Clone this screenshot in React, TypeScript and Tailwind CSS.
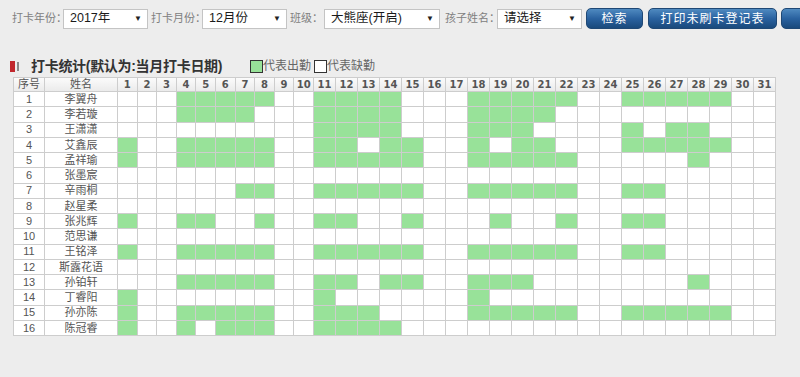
import React from 'react';

const font = { fontFamily: '"Liberation Sans", "Noto Sans CJK SC", sans-serif' };

const students: [string, number[]][] = [
  ['李翼舟', [4, 5, 6, 7, 8, 11, 12, 13, 14, 18, 19, 20, 21, 22, 25, 26, 27, 28, 29]],
  ['李若璇', [4, 5, 6, 7, 11, 12, 13, 14, 18, 19, 20, 21]],
  ['王潇潇', [11, 12, 13, 14, 18, 19, 20, 25, 27, 28]],
  ['艾鑫辰', [1, 4, 5, 6, 7, 8, 11, 12, 14, 15, 18, 20, 21, 25, 26, 27, 28, 29]],
  ['孟祥瑜', [1, 4, 5, 6, 7, 8, 11, 12, 13, 14, 15, 18, 19, 20, 21, 22, 28]],
  ['张墨宸', []],
  ['辛雨桐', [7, 8, 11, 12, 13, 14, 15, 18, 19, 20, 21, 22, 25, 26]],
  ['赵星柔', []],
  ['张兆辉', [1, 4, 5, 8, 11, 12, 15, 19, 22, 25, 26]],
  ['范思谦', []],
  ['王铭泽', [1, 4, 5, 6, 7, 8, 11, 12, 13, 14, 15, 18, 19, 20, 21, 22, 25, 26]],
  ['斯露花语', []],
  ['孙铂轩', [4, 5, 6, 7, 8, 11, 12, 14, 15, 18, 19, 20, 28]],
  ['丁睿阳', [1, 11, 18]],
  ['孙亦陈', [1, 4, 5, 6, 7, 8, 11, 12, 13, 18, 19, 20, 21, 22, 25, 26, 27, 28, 29]],
  ['陈冠睿', [1, 4, 6, 7, 8, 11, 12, 13, 14]],
];

const days = Array.from({ length: 31 }, (_, i) => i + 1);

const Select = ({ value, width }: { value: string; width: string }) => (
  <div className={`${width} h-[20px] shrink-0 bg-white border border-[#c4c4c4] flex items-center justify-between pl-[6px] pr-[5px]`}>
    <span className="text-[12.5px] text-[#1a1a1a]">{value}</span>
    <span className="text-[8px] text-[#222]">▼</span>
  </div>
);

const Button = ({ label, width }: { label: string; width: string }) => (
  <div className={`${width} h-[21px] shrink-0 rounded-[5px] border border-[#1f4875] bg-gradient-to-b from-[#4f8ac0] via-[#2a62a0] to-[#1a4a7c] flex items-center justify-center text-white text-[12px] tracking-[1px]`}>
    {label}
  </div>
);

const Label = ({ text, width }: { text: string; width: string }) => (
  <div className={`${width} shrink-0 whitespace-nowrap text-[11px] text-[#808080]`}>{text}</div>
);

export default function App() {
  return (
    <div className="w-[800px] h-[377px] overflow-hidden bg-[#ededed]" style={font}>
      <div className="flex items-center pl-[12px] pt-[8px] h-[29px]">
        <Label text="打卡年份：" width="w-[51px]" />
        <Select value="2017年" width="w-[85px]" />
        <Label text="打卡月份：" width="w-[51px] ml-[3px]" />
        <Select value="12月份" width="w-[85px]" />
        <Label text="班级：" width="w-[34px] ml-[3px]" />
        <Select value="大熊座(开启)" width="w-[116px]" />
        <Label text="孩子姓名：" width="w-[52px] ml-[5px]" />
        <Select value="请选择" width="w-[85px]" />
        <div className="ml-[4px]"><Button label="检索" width="w-[57px]" /></div>
        <div className="ml-[5px]"><Button label="打印未刷卡登记表" width="w-[129px]" /></div>
        <div className="ml-[4px]"><Button label="" width="w-[60px]" /></div>
      </div>

      <div className="mt-[27px] h-[20px] flex items-center">
        <div className="ml-[10px] w-[5px] h-[11px] bg-[#c1272d]" />
        <div className="ml-[2px] w-[2px] h-[9px] bg-[#8a8a8a]" />
        <div className="ml-[12px] w-[219px] shrink-0 whitespace-nowrap text-[14px] font-bold text-[#333] tracking-[-0.3px]">
          打卡统计(默认为:当月打卡日期)
        </div>
        <div className="w-[13px] h-[13px] border border-[#333] bg-[#98e299]" />
        <span className="text-[12px] text-[#666] w-[51px]">代表出勤</span>
        <div className="w-[13px] h-[13px] border border-[#333] bg-white" />
        <span className="text-[12px] text-[#666]">代表缺勤</span>
      </div>

      <div className="ml-[13px] mt-[1px] w-fit grid gap-px p-px bg-[#cdcdcd] grid-cols-[30px_72px_repeat(10,18.6px)_repeat(21,21px)] grid-rows-[13px_repeat(16,14.25px)] text-[11px] text-[#555]">
        <div className="bg-gradient-to-b from-[#fbfbfb] to-[#ebebeb] flex items-center justify-center">序号</div>
        <div className="bg-gradient-to-b from-[#fbfbfb] to-[#ebebeb] flex items-center justify-center">姓名</div>
        {days.map((d) => (
          <div
            key={d}
            className="bg-gradient-to-b from-[#fbfbfb] to-[#ebebeb] flex items-center justify-center font-bold text-[10.5px] text-[#555]"
            style={{ fontFamily: '"DejaVu Sans", sans-serif', fontSize: '10px' }}
          >
            {d}
          </div>
        ))}
        {students.map(([name, present], i) => (
          <React.Fragment key={name}>
            <div className="bg-white flex items-center justify-center">{i + 1}</div>
            <div className="bg-white flex items-center justify-center">{name}</div>
            {days.map((d) => (
              <div key={d} className={present.includes(d) ? 'bg-[#98e299]' : 'bg-white'} />
            ))}
          </React.Fragment>
        ))}
      </div>
    </div>
  );
}
